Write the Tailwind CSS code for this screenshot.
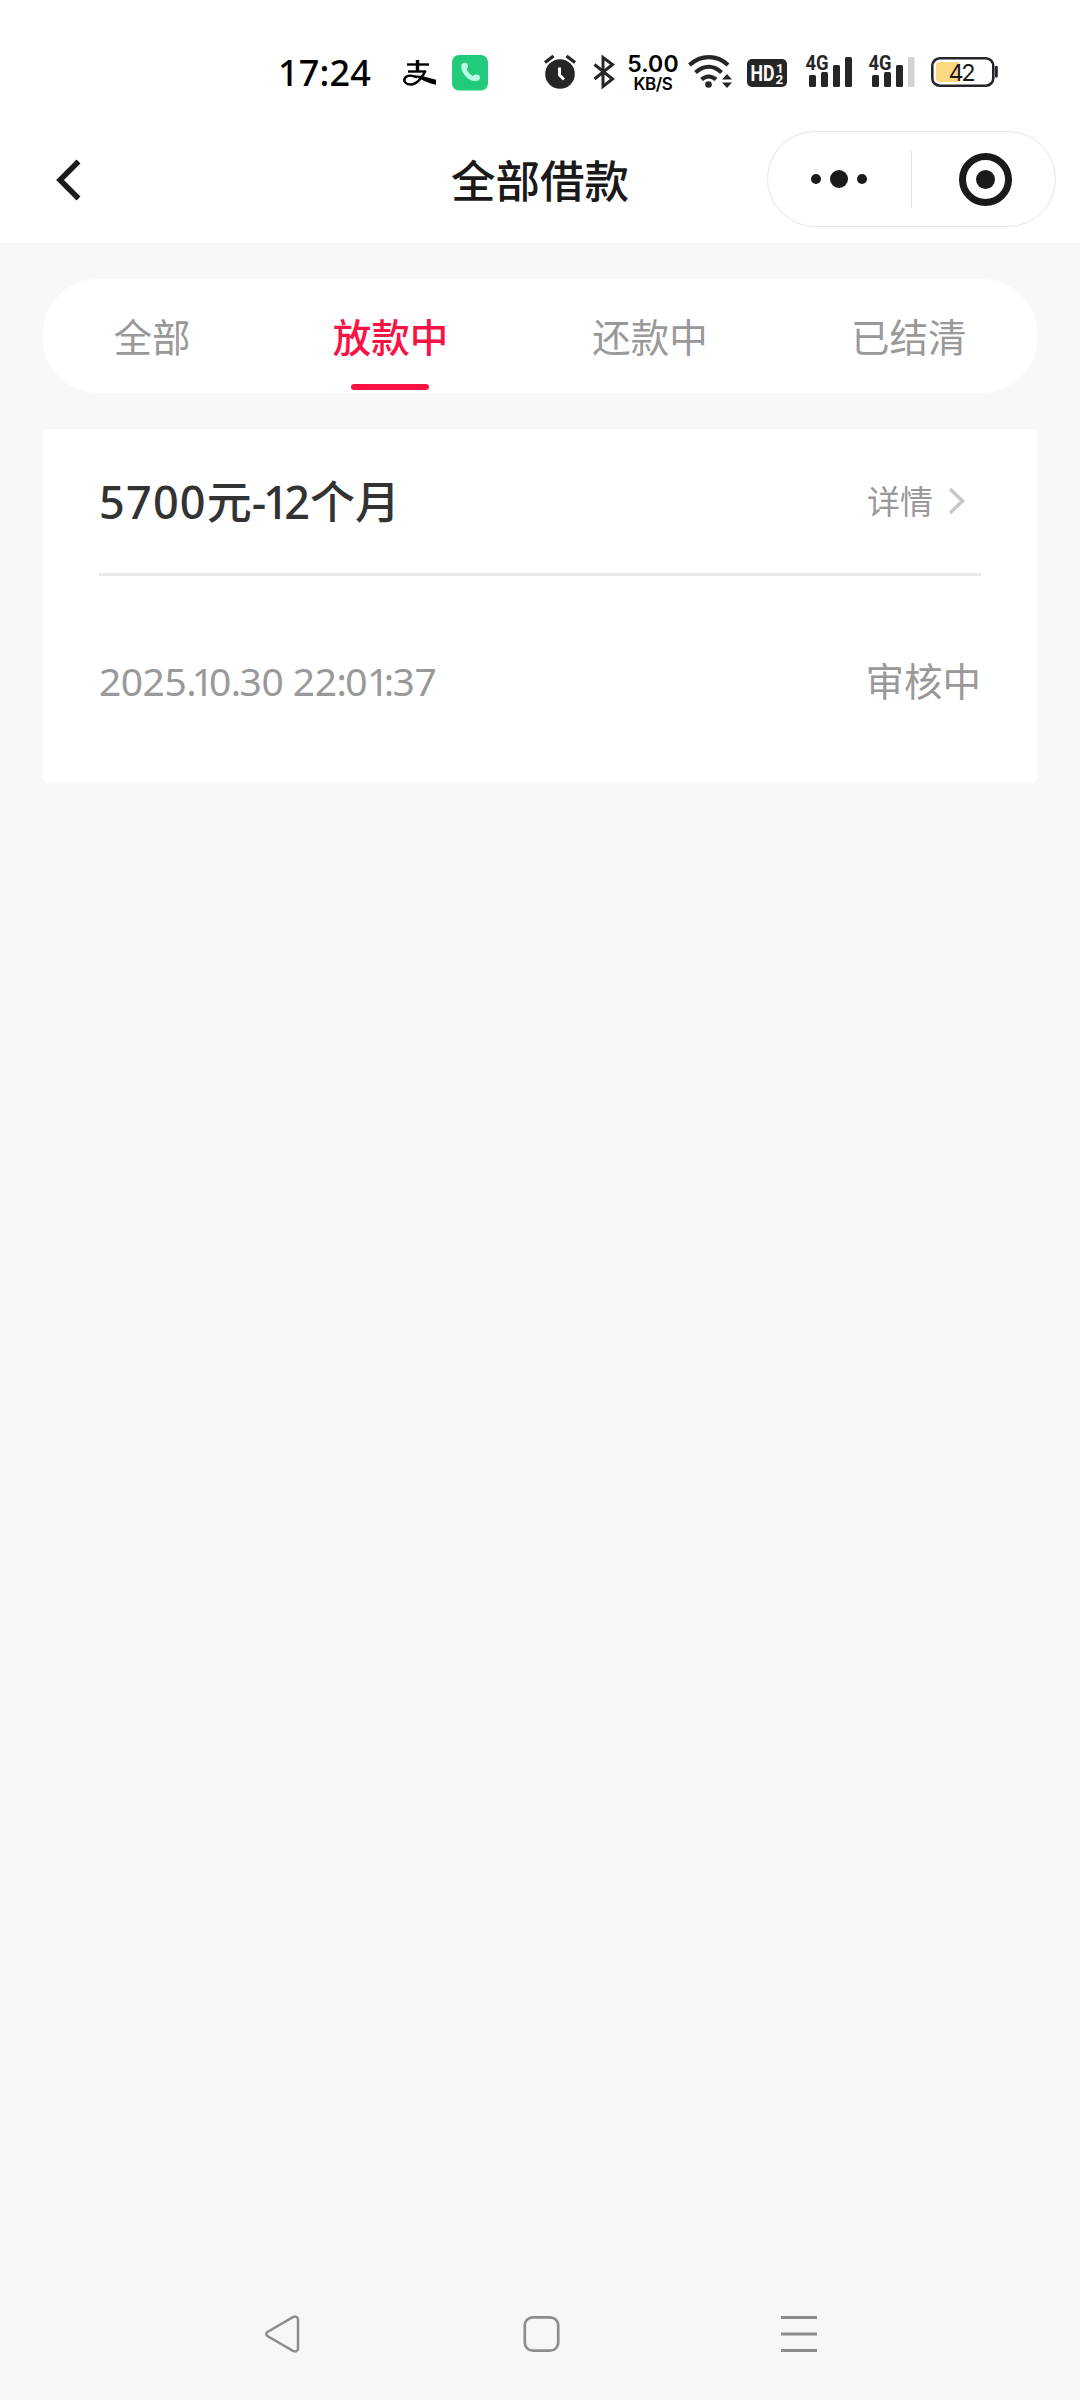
<!DOCTYPE html>
<html lang="zh-CN">
<head>
<meta charset="utf-8">
<title>全部借款</title>
<script src="https://cdn.jsdelivr.net/npm/@tailwindcss/browser@4"></script>
</head>
<body class="w-[1080px] h-[2400px] flex flex-col overflow-hidden bg-[#f6f8fa] font-['Noto_Sans','Noto_Sans_CJK_SC',sans-serif] text-[#999]">
<header class="bg-white h-[243px] shrink-0">
  <!-- status bar -->
  <div class="h-[116px] pt-[50px] pl-[278px] flex items-start text-black">
    <div class="w-[122px] h-[46px] leading-[46px] text-[36px] font-medium tracking-[0.2px] whitespace-nowrap">17:24</div>
    <svg class="w-[40px] h-[46px] shrink-0" viewBox="400 50 40 46" fill="none" stroke="#000"><path d="M407 64.500h22" stroke-width="2.400"/><path d="M417.500 60v11" stroke-width="3.400"/><path d="M408 71.500h17" stroke-width="2.400"/><path d="M425.500 70.500c-2 5-8 14-15 14c-5 0-7.500-3.500-5.500-6.500c2.500-3.500 8-2.500 12 -.5" stroke-width="2.400"/><path d="M413 75.500l8 .2 15 4v5c-7-1-14-5-21-8.200z" fill="#000" stroke="none"/></svg>
    <svg class="ml-[11px] w-[38px] h-[46px] shrink-0" viewBox="451 50 38 46"><rect x="452" y="55" width="36" height="35.500" rx="7" fill="#21cb7b"/><path d="M461.500 64.500c1.500-2 4.500-2.500 5.800-.8c1.200 1.800 1 3.600-.7 5.200c1 2.800 3.400 5.600 6.300 7.100c1.800-1.700 4-1.900 6.100-.8c1.800 1.200.8 4.700-.9 5.500c-8 3-18.500-8.500-16.600-16.200z" fill="#b9ffe2"/></svg>
    <svg class="ml-[53px] w-[36px] h-[46px] shrink-0" viewBox="542 50 36 46" fill="none"><circle cx="560" cy="74" r="14.800" fill="#262626"/><path d="M545 62.500l8.500-6.500M575 62.500l-8.500-6.500" stroke="#262626" stroke-width="3.400"/><path d="M559.500 67.500v7.500l4.500 4.500" stroke="#fff" stroke-width="3"/></svg>
    <svg class="ml-[13px] w-[26px] h-[46px] shrink-0" viewBox="591 50 26 46" fill="none" stroke="#262626" stroke-width="3"><path d="M594.500 64.500l18 14.500-9.500 7.500v-29l9.500 7-18 14.500"/></svg>
    <div class="ml-[10px] w-[52px] h-[46px] pt-[4px] flex flex-col items-center font-['Inter',sans-serif]">
      <div class="h-[21px] leading-[21px] text-[23px] font-semibold tracking-[0.200px]">5.00</div>
      <div class="h-[18px] leading-[18px] text-[17px] font-semibold tracking-[-0.400px]">KB/S</div>
    </div>
    <svg class="ml-[7px] w-[48px] h-[46px] shrink-0" viewBox="686 50 48 46" fill="none" stroke="#262626" stroke-width="4.200"><path d="M689.500 65c11.500-10.500 27.500-10.500 38.500 0M695.500 72.500c8.500-7.500 18-7.500 26 0M701.500 79.500c4.500-4 10-4 14.500 0"/><circle cx="708.500" cy="84.500" r="3.300" fill="#262626" stroke="none"/><path d="M722 79.500l5-5.500 5 5.500zM722 82.500l5 5.500 5-5.500z" fill="#262626" stroke="none"/></svg>
    <svg class="ml-[13px] w-[40px] h-[46px] shrink-0" viewBox="747 50 40 46" fill="#fff" font-family="Roboto" font-weight="700"><rect x="747" y="59" width="40" height="28" rx="5" fill="#262626"/><text x="750.500" y="81" font-size="21.500" textLength="24" lengthAdjust="spacingAndGlyphs">HD</text><text x="776" y="72.500" font-size="13.500">1</text><text x="775.500" y="84" font-size="13.500">2</text></svg>
    <svg class="ml-[17px] w-[50px] h-[46px] shrink-0" viewBox="804 50 50 46" fill="#262626"><text x="805.500" y="70" font-family="Roboto" font-weight="700" font-size="20.500" textLength="23" lengthAdjust="spacingAndGlyphs">4G</text><rect x="809" y="75" width="7" height="12" rx="1.500"/><rect x="821" y="72" width="7" height="15" rx="1.500"/><rect x="833" y="65" width="7" height="22" rx="1.500"/><rect x="845" y="57" width="7" height="30" rx="1.500"/></svg>
    <svg class="ml-[13px] w-[50px] h-[46px] shrink-0" viewBox="804 50 50 46" fill="#262626"><text x="805.500" y="70" font-family="Roboto" font-weight="700" font-size="20.500" textLength="23" lengthAdjust="spacingAndGlyphs">4G</text><rect x="809" y="75" width="7" height="12" rx="1.500"/><rect x="821" y="72" width="7" height="15" rx="1.500"/><rect x="833" y="65" width="7" height="22" rx="1.500"/><rect x="845" y="57" width="6.500" height="30" rx="1.500" fill="#d3d3d3"/></svg>
    <svg class="ml-[13px] w-[70px] h-[46px] shrink-0" viewBox="930 50 70 46"><rect x="932.300" y="58.300" width="61" height="27.400" rx="7.500" fill="#fff" stroke="#25252d" stroke-width="2.600"/><path d="M939 62h20v20h-20a3 3 0 0 1-3-3v-14a3 3 0 0 1 3-3z" fill="#ffd981"/><rect x="995" y="66" width="2.800" height="11.500" rx="1" fill="#25252d"/><text x="948.500" y="81" font-family="Inter" font-size="23.500" fill="#1c1c1c" textLength="27">42</text></svg>
  </div>
  <!-- title bar -->
  <div class="h-[127px] pl-[54px] pr-[24px] flex items-start">
    <svg class="mt-[42px] w-[30px] h-[44px] shrink-0" viewBox="54 158 30 44" fill="none" stroke="#1a1a1a" stroke-width="5.500"><path d="M78.500 161.500l-18.500 18.500 18.500 18.500"/></svg>
    <h1 class="ml-[367px] mt-[33px] w-[183px] h-[64px] leading-[64px] text-[44.500px] font-medium text-[#1a1a1a] whitespace-nowrap">全部借款</h1>
    <div class="ml-auto mt-[15px] w-[289px] h-[96px] rounded-full border border-[#e5e5e5] flex items-center">
      <div class="w-[143px] pr-[2px] flex items-center justify-center gap-[9px]">
        <i class="size-[10px] rounded-full bg-[#1a1a1a]"></i><i class="size-[18px] rounded-full bg-[#1a1a1a]"></i><i class="size-[10px] rounded-full bg-[#1a1a1a]"></i>
      </div>
      <div class="w-px h-[57px] bg-[#e2e2e2]"></div>
      <div class="flex-1 flex justify-center pl-[3px]">
        <div class="size-[53px] rounded-full border-[7px] border-[#1a1a1a] flex items-center justify-center"><i class="size-[19px] rounded-full bg-[#1a1a1a]"></i></div>
      </div>
    </div>
  </div>
</header>
<main class="flex-1 pt-[36px] px-[42px]">
  <nav class="h-[114px] rounded-full bg-white flex justify-around text-[38.500px] leading-[116px] whitespace-nowrap">
    <span>全部</span>
    <span class="relative -left-px font-medium text-[#f91345]">放款中<i class="absolute left-1/2 -translate-x-1/2 top-[105px] w-[78px] h-[6px] rounded-full bg-[#f91345]"></i></span>
    <span>还款中</span>
    <span>已结清</span>
  </nav>
  <section class="mt-[36px] h-[354px] rounded-[8px] bg-white px-[57px]">
    <div class="h-[147px] pt-[2px] border-b-[3px] border-[#e9e9e9] flex items-center justify-between">
      <h2 class="text-[45px] font-medium text-[#333] leading-[64px] whitespace-nowrap"><span class="tracking-[1.200px]">5700</span>元<span class="tracking-[-3.200px]">-</span><span class="tracking-[-4.500px]">1</span>2个月</h2>
      <div class="flex items-center text-[33px] leading-[50px] pr-[14px] gap-[14px]">详情
        <svg class="w-[20px] h-[28px] mb-[2px]" viewBox="0 0 20 28" fill="none" stroke="#c8c8c8" stroke-width="3.500"><path d="M3 2l12.500 12-12.500 12"/></svg>
      </div>
    </div>
    <div class="h-[207px] pt-[2px] flex items-center justify-between text-[39px] leading-[56px]">
      <span class="whitespace-nowrap tracking-[-0.500px]">2025<span class="tracking-[-5px]">.1</span>0<span class="tracking-[-1.700px]">.</span>30 22<span class="tracking-[-1.700px]">:</span>0<span class="tracking-[-5.500px]">1</span><span class="tracking-[-1.700px]">:</span>37</span>
      <span class="text-[38.500px]">审核中</span>
    </div>
  </section>
</main>
<footer class="h-[131px] shrink-0 bg-[#f7f7f7] pl-[264px] pr-[261px] pb-[1px] flex items-center justify-between">
  <svg class="size-[40px]" viewBox="0 0 40 40" fill="none" stroke="#8d8d8d" stroke-width="2.500"><path d="M3.400 18l25.500-14.800q4.500-1.800 5.100 2v29.600q-.6 3.800-5.100 2l-25.500-14.800q-2.500-2 0-4z"/></svg>
  <svg class="size-[40px]" viewBox="0 0 40 40" fill="none" stroke="#8d8d8d" stroke-width="2.700"><rect x="2.800" y="3.300" width="33.400" height="33.400" rx="8"/></svg>
  <svg class="size-[40px]" viewBox="0 0 40 40" fill="none" stroke="#8d8d8d" stroke-width="3"><path d="M2 3.500h36M2 20h36M2 36.500h36"/></svg>
</footer>
</body>
</html>
